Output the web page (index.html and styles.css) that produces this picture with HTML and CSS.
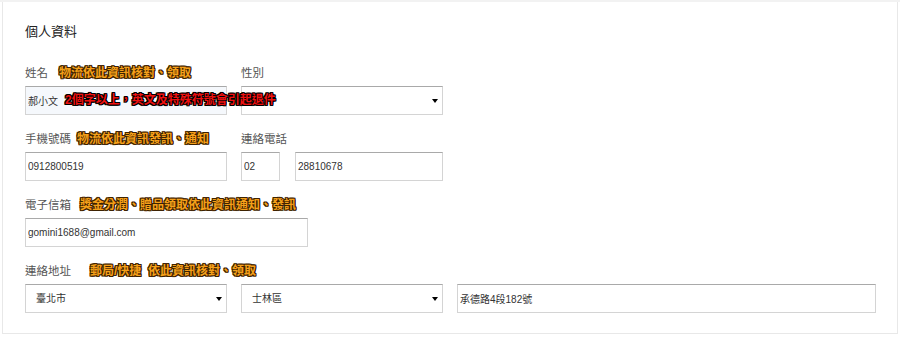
FILE: index.html
```html
<!DOCTYPE html>
<html>

<head>
    <title>個人資料</title>
    <link rel="stylesheet" href="styles.css">
</head>

<body>
    <div class="panel">
        <h3 class="title">個人資料</h3>

        <div class="form-row">
            <div class="label">姓名<span class="note note-name">物流依此資訊核對、領取</span></div>
            <div class="label">性別</div>
            <div class="input-wrap">
                <input type="text" class="field field-auto" value="郝小文">
                <span class="warn">2個字以上，英文及特殊符號會引起退件</span>
            </div>
            <div class="select-wrap">
                <select class="field select"><option></option></select>
            </div>
        </div>

        <div class="form-row">
            <div class="label">手機號碼<span class="note note-phone">物流依此資訊發訊、通知</span></div>
            <div class="label">連絡電話</div>
            <input type="text" class="field" value="0912800519">
            <div class="tel">
                <input type="text" class="field area" value="02">
                <input type="text" class="field number" value="28810678">
            </div>
        </div>

        <div class="form-row">
            <div class="label">電子信箱<span class="note note-mail">獎金分潤、贈品領取依此資訊通知、發訊</span></div>
            <input type="text" class="field email" value="gomini1688@gmail.com">
        </div>

        <div class="form-row last">
            <div class="label">連絡地址<span class="note note-addr">郵局/快捷&nbsp;&nbsp;依此資訊核對、領取</span></div>
            <div class="select-wrap">
                <select class="field select"><option>臺北市</option></select>
            </div>
            <div class="select-wrap">
                <select class="field select"><option>士林區</option></select>
            </div>
            <input type="text" class="field" value="承德路4段182號">
        </div>
    </div>
</body>

</html>
```

FILE: styles.css
```css
html,
body {
    margin: 0;
    padding: 0;
    height: 100%;
}

body {
    background-color: #fff;
    border-top: 2px solid #f2f2f2;
    font-family: "Liberation Sans", "Noto Sans CJK TC", sans-serif;
    color: #555;
    box-sizing: border-box;
}

.panel {
    margin: 0 2px 0 2px;
    background-color: #fff;
    border: 1px solid #e8e8e8;
    border-top: none;
    padding: 20px 22px 20px 22px;
}

.title {
    margin: 0 0 21px 0;
    font-size: 13px;
    line-height: 20px;
    font-weight: normal;
    color: #222;
}

.form-row {
    display: grid;
    grid-template-columns: 202px 202px 419px;
    grid-template-rows: 20px 29px;
    column-gap: 14px;
    row-gap: 3px;
    margin-bottom: 14px;
}

.form-row > * {
    grid-row: 2;
}

.form-row > .label {
    grid-row: 1;
}

.form-row.last {
    margin-bottom: 0;
}

.label {
    font-size: 11.5px;
    line-height: 20px;
    height: 20px;
    white-space: nowrap;
    color: #555;
}

.note {
    font-size: 12px;
    font-weight: bold;
    color: #f5a01a;
    text-shadow: 1px 0 #3d2200, -1px 0 #3d2200, 0 1px #3d2200, 0 -1px #3d2200,
        1px 1px #3d2200, -1px -1px #3d2200, 1px -1px #3d2200, -1px 1px #3d2200;
}

.note-name { margin-left: 11px; }
.note-phone { margin-left: 6px; }
.note-mail { margin-left: 9px; }
.note-addr { margin-left: 19px; }

.field {
    box-sizing: border-box;
    height: 29px;
    width: 100%;
    margin: 0;
    padding: 0 2px;
    border: 1px solid #d4d4d4;
    border-top-color: #a9a9a9;
    background-color: #fff;
    font-family: "Liberation Sans", "Noto Sans CJK TC", sans-serif;
    font-size: 10px;
    color: #333;
    outline: none;
}

.field-auto {
    background-color: #f5f8fc;
}

.input-wrap,
.select-wrap {
    position: relative;
}

.input-wrap {
    z-index: 1;
}

.warn {
    position: absolute;
    left: 40px;
    top: 0;
    line-height: 29px;
    font-size: 12px;
    font-weight: bold;
    color: #ee1111;
    white-space: nowrap;
    text-shadow: 1px 0 #000, -1px 0 #000, 0 1px #000, 0 -1px #000,
        1px 1px #000, -1px -1px #000, 1px -1px #000, -1px 1px #000;
}

.select {
    -webkit-appearance: none;
    appearance: none;
    padding: 0 10px;
    border-radius: 0;
}

.select-wrap::after {
    content: "";
    position: absolute;
    right: 5px;
    top: 13px;
    border-left: 3px solid transparent;
    border-right: 3px solid transparent;
    border-top: 4px solid #000;
}

.tel {
    display: flex;
    gap: 15px;
}

.tel .area {
    width: 39px;
}

.tel .number {
    width: 148px;
}

.email {
    width: 283px;
}
```
